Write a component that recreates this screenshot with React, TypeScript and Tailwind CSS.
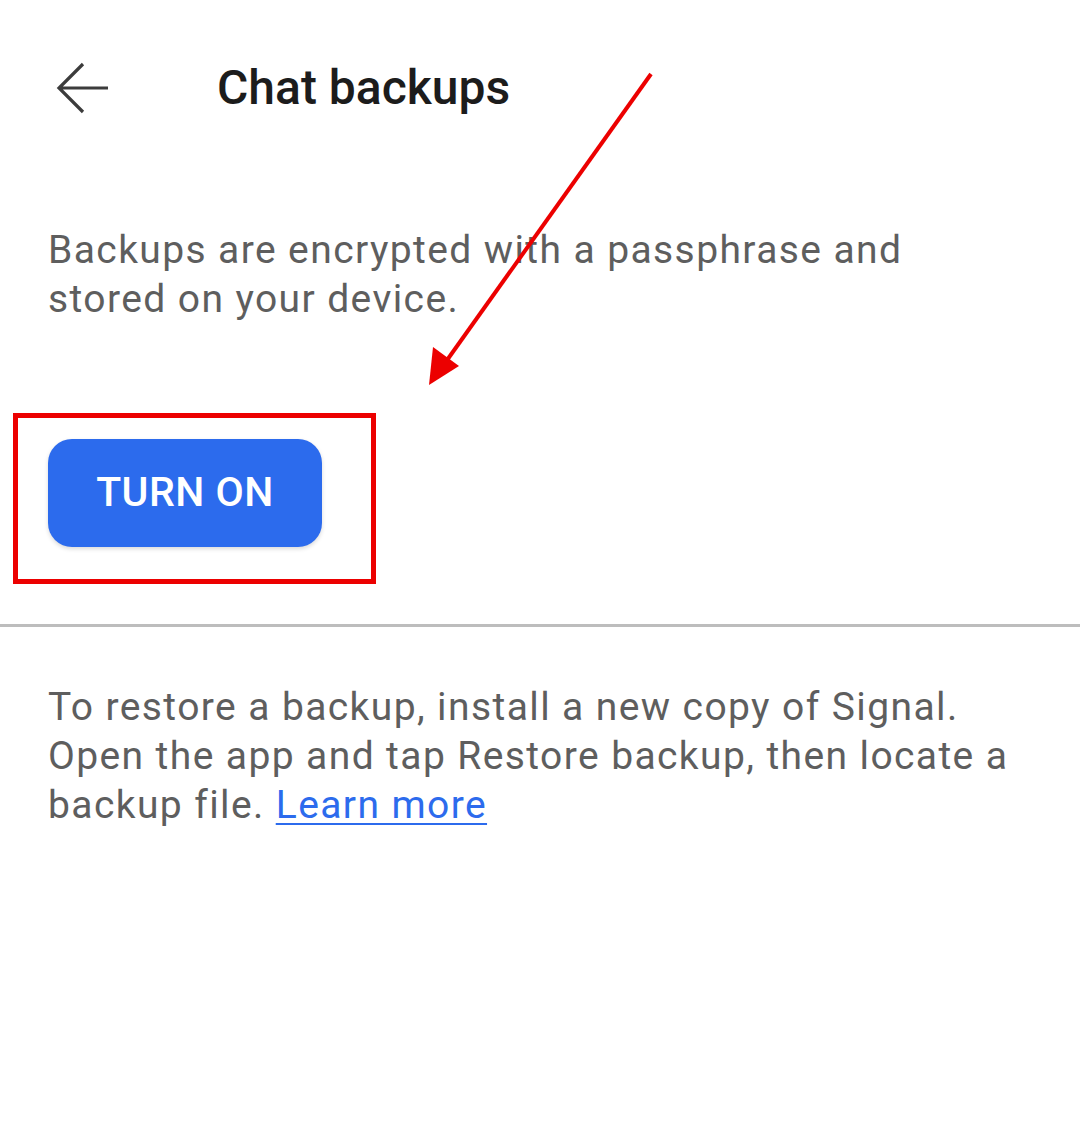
import React from "react";

export default function App() {
  return (
    <div
      className="relative w-[1080px] h-[1132px] bg-white overflow-hidden"
      style={{ fontFamily: "Roboto, 'Noto Sans', sans-serif" }}
    >
      {/* Header */}
      <div className="flex items-center h-[176px]">
        <div className="w-[217px] pl-[56px] flex items-center">
          <svg width="54" height="54" viewBox="0 0 54 54" fill="none">
            <path
              d="M52 27H3M27 3L3 27L27 51"
              stroke="#3c3c3c"
              strokeWidth="3.2"
              strokeLinecap="butt"
              strokeLinejoin="miter"
            />
          </svg>
        </div>
        <h1 className="text-[48px] font-medium text-[#1c1c1c] leading-none">Chat backups</h1>
      </div>

      {/* Description */}
      <p className="mt-[50px] px-[48px] text-[39px] tracking-[1.4px] leading-[49px] text-[#5e5e5e] whitespace-nowrap">
        Backups are encrypted with a passphrase and
        <br />
        stored on your device.
      </p>

      {/* Button */}
      <div className="px-[48px] mt-[115px]">
        <button className="w-[274px] h-[108px] rounded-[24px] bg-[#2c6bed] text-white text-[41px] font-medium tracking-[0.5px] shadow-[0_2px_4px_rgba(0,0,0,0.15)]">
          TURN ON
        </button>
      </div>

      {/* Divider */}
      <div className="mt-[77px] h-[3px] bg-[#bdbdbd]" />

      {/* Restore text */}
      <p className="mt-[56px] px-[48px] text-[39px] tracking-[1.4px] leading-[49px] text-[#5e5e5e] whitespace-nowrap">
        To restore a backup, install a new copy of Signal.
        <br />
        Open the app and tap Restore backup, then locate a
        <br />
        backup file.{" "}
        <a className="text-[#2c6bed] underline underline-offset-[5px] decoration-[2px]">Learn more</a>
      </p>

      {/* Annotation: red box */}
      <div className="absolute left-[13px] top-[413px] w-[363px] h-[171px] border-[5px] border-[#ec0000] pointer-events-none" />

      {/* Annotation: red arrow */}
      <svg className="absolute left-0 top-0 pointer-events-none" width="1080" height="1132">
        <line x1="651" y1="74" x2="440" y2="370" stroke="#ec0000" strokeWidth="4" />
        <polygon points="429,385 433,347 459,366" fill="#ec0000" />
      </svg>
    </div>
  );
}
